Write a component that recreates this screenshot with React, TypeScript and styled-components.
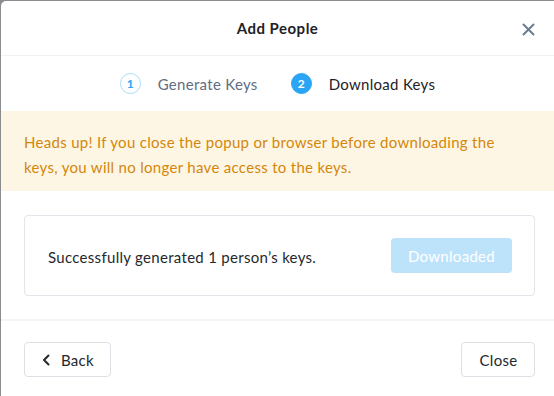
import React from "react";
import styled, { createGlobalStyle } from "styled-components";

const Global = createGlobalStyle`
  html, body { margin: 0; padding: 0; }
  body {
    background: #8a8c8f;
    font-family: "Lato", "Noto Sans", sans-serif;
    letter-spacing: 0.3px;
    width: 554px;
    height: 396px;
    overflow: hidden;
  }
  * { box-sizing: border-box; }
`;

const Modal = styled.div`
  margin: 1px 0 0 1px;
  width: 553px;
  height: 395px;
  background: #ffffff;
  border-top-left-radius: 5px;
  display: flex;
  flex-direction: column;
`;

const Header = styled.div`
  position: relative;
  height: 55px;
  display: flex;
  align-items: center;
  justify-content: center;
  border-bottom: 1px solid #f1f2f4;
`;

const Title = styled.h1`
  margin: 0;
  font-size: 15px;
  font-weight: 700;
  letter-spacing: 0.5px;
  color: #1e2227;
`;

const CloseIcon = styled.button`
  position: absolute;
  right: 19px;
  top: 21px;
  width: 14px;
  height: 14px;
  padding: 0;
  border: 0;
  background: none;
  display: flex;
  align-items: center;
  justify-content: center;
`;

const Steps = styled.div`
  height: 55px;
  display: flex;
  align-items: center;
  justify-content: center;
  gap: 33px;
`;

const Step = styled.div`
  display: flex;
  align-items: center;
  gap: 17px;
`;

const StepDot = styled.span<{ $active?: boolean }>`
  width: 21px;
  height: 21px;
  border-radius: 50%;
  display: flex;
  align-items: center;
  justify-content: center;
  font-size: 12px;
  font-weight: 700;
  letter-spacing: 0;
  border: 1px solid ${(p) => (p.$active ? "#2aa4f4" : "#a9dcfb")};
  background: ${(p) => (p.$active ? "#2aa4f4" : "#ffffff")};
  color: ${(p) => (p.$active ? "#ffffff" : "#2aa4f4")};
`;

const StepLabel = styled.span<{ $active?: boolean }>`
  font-size: 15px;
  color: ${(p) => (p.$active ? "#1e2227" : "#5f6d80")};
`;

const Warning = styled.div`
  background: #fef6e5;
  color: #d3870b;
  font-size: 15px;
  line-height: 25px;
  padding: 19px 40px 11px 23px;
`;

const Body = styled.div`
  padding: 24px 19px 23px 23px;
  border-bottom: 2px solid #f3f4f6;
`;

const Card = styled.div`
  height: 81px;
  border: 1px solid #e2e5e9;
  border-radius: 4px;
  display: flex;
  align-items: center;
  justify-content: space-between;
  padding: 0 22px 0 23px;
`;

const CardText = styled.span`
  font-size: 15px;
  color: #24282d;
  margin-top: 2px;
`;

const PrimaryButton = styled.button`
  width: 121px;
  height: 35px;
  border: 0;
  border-radius: 4px;
  background: #bde3fb;
  color: #ffffff;
  font-family: inherit;
  letter-spacing: inherit;
  font-size: 15px;
`;

const Footer = styled.div`
  flex: 1;
  display: flex;
  justify-content: space-between;
  align-items: flex-start;
  padding: 21px 19px 0 23px;
`;

const GhostButton = styled.button<{ $w: number }>`
  width: ${(p) => p.$w}px;
  height: 35px;
  border: 1px solid #dde1e6;
  border-radius: 4px;
  background: #ffffff;
  color: #24282d;
  font-family: inherit;
  letter-spacing: inherit;
  font-size: 15px;
  display: flex;
  align-items: center;
  justify-content: center;
  gap: 11px;
  padding: 0 0 0 1px;
`;

export default function App() {
  return (
    <>
      <Global />
      <Modal>
        <Header>
          <Title>Add People</Title>
          <CloseIcon aria-label="Close">
            <svg width="13" height="13" viewBox="0 0 13 13">
              <path d="M1.5 1.5L11.5 11.5M11.5 1.5L1.5 11.5" stroke="#6b7c91" strokeWidth="2" strokeLinecap="round" />
            </svg>
          </CloseIcon>
        </Header>
        <Steps>
          <Step>
            <StepDot>1</StepDot>
            <StepLabel>Generate Keys</StepLabel>
          </Step>
          <Step>
            <StepDot $active>2</StepDot>
            <StepLabel $active>Download Keys</StepLabel>
          </Step>
        </Steps>
        <Warning>
          Heads up! If you close the popup or browser before downloading the keys, you will no longer have access to the keys.
        </Warning>
        <Body>
          <Card>
            <CardText>Successfully generated 1 person’s keys.</CardText>
            <PrimaryButton>Downloaded</PrimaryButton>
          </Card>
        </Body>
        <Footer>
          <GhostButton $w={87}>
            <svg width="8" height="12" viewBox="0 0 8 12">
              <path d="M6.5 1.5L2 6L6.5 10.5" stroke="#24282d" strokeWidth="2" fill="none" strokeLinecap="round" strokeLinejoin="round" />
            </svg>
            Back
          </GhostButton>
          <GhostButton $w={74}>Close</GhostButton>
        </Footer>
      </Modal>
    </>
  );
}
